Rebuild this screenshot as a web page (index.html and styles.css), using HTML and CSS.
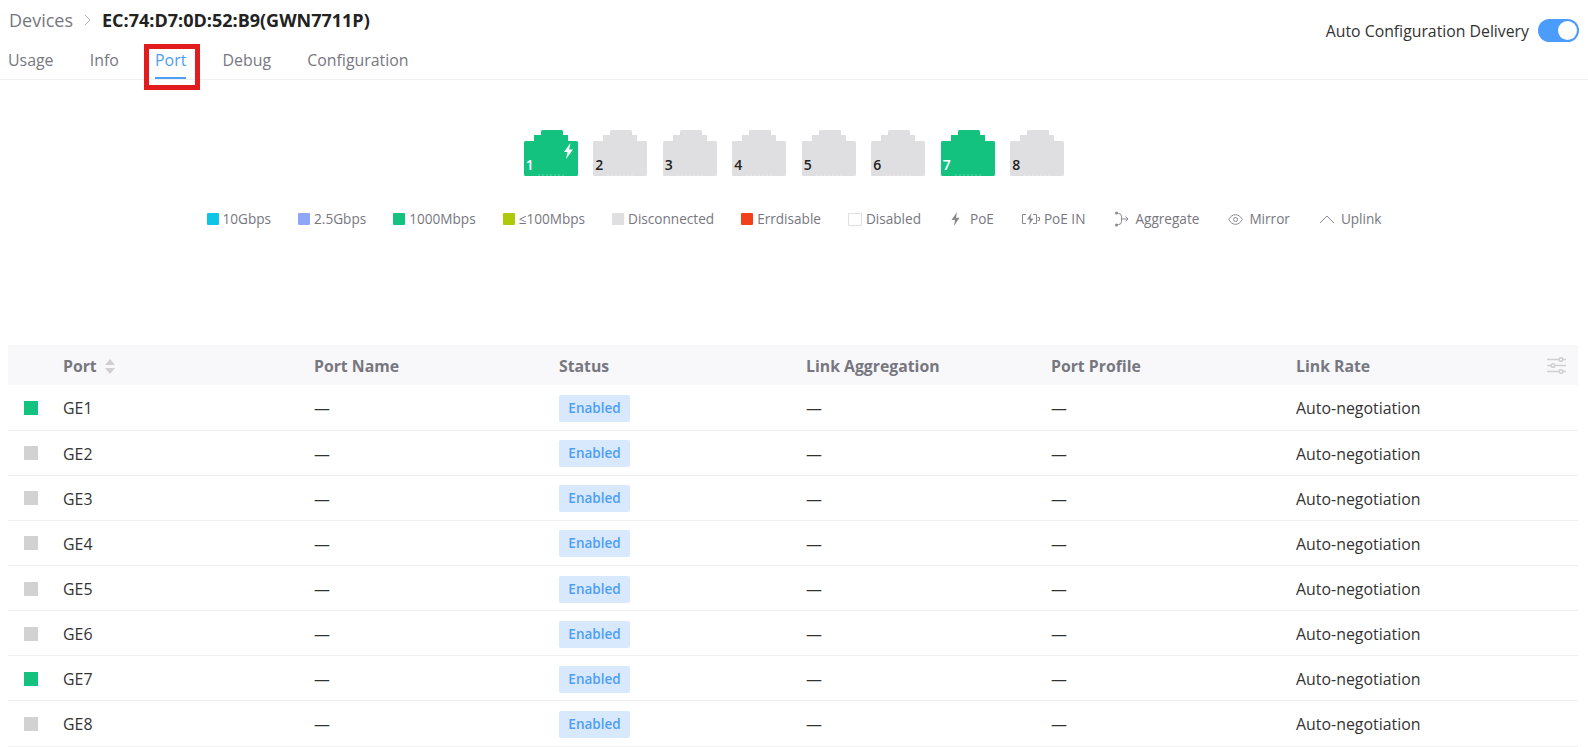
FILE: index.html
```html
<!DOCTYPE html>
<html lang="en">
<head>
    <meta charset="UTF-8">
    <title>Devices - Port</title>
    <link rel="stylesheet" href="styles.css">
</head>
<body>
    <svg class="defs" width="0" height="0">
        <symbol id="rj45" viewBox="0 0 54 46">
            <path d="M17 1.5 a1.5 1.5 0 0 1 1.5 -1.5 H37.5 a1.5 1.5 0 0 1 1.5 1.5 V5 H44 V11 H52.5 a1.5 1.5 0 0 1 1.5 1.5 V44.5 a1.5 1.5 0 0 1 -1.5 1.5 H1.5 a1.5 1.5 0 0 1 -1.5 -1.5 V12.5 a1.5 1.5 0 0 1 1.5 -1.5 H10 V5 H17 Z" fill="currentColor"/>
            <path d="M14 45 H40" stroke="#fff" stroke-opacity=".35" stroke-width="1" stroke-dasharray="2 2"/>
        </symbol>
    </svg>

    <header class="page-head">
        <div class="head-left">
            <div class="breadcrumb">
                <span class="crumb">Devices</span>
                <svg class="crumb-sep" width="7" height="12" viewBox="0 0 7 12"><path d="M1 1l5 5-5 5" fill="none" stroke="#b5b5ba" stroke-width="1"/></svg>
                <span class="crumb-current">EC:74:D7:0D:52:B9(GWN7711P)</span>
            </div>
            <nav class="tabs">
                <a class="tab">Usage</a>
                <a class="tab">Info</a>
                <a class="tab active">Port<span class="red-box"></span></a>
                <a class="tab">Debug</a>
                <a class="tab">Configuration</a>
            </nav>
        </div>
        <div class="auto-config">
            <span>Auto Configuration Delivery</span>
            <span class="switch"><span class="knob"></span></span>
        </div>
    </header>

    <section class="ports">
        <div class="port up"><svg width="54" height="46"><use href="#rj45"/></svg><svg class="bolt" width="11" height="16" viewBox="0 0 11 16"><path d="M7.5 0L1 9h3.6L3 16l7-9.6H6.2z" fill="#fff"/></svg><span class="port-num">1</span></div>
        <div class="port"><svg width="54" height="46"><use href="#rj45"/></svg><span class="port-num">2</span></div>
        <div class="port"><svg width="54" height="46"><use href="#rj45"/></svg><span class="port-num">3</span></div>
        <div class="port"><svg width="54" height="46"><use href="#rj45"/></svg><span class="port-num">4</span></div>
        <div class="port"><svg width="54" height="46"><use href="#rj45"/></svg><span class="port-num">5</span></div>
        <div class="port"><svg width="54" height="46"><use href="#rj45"/></svg><span class="port-num">6</span></div>
        <div class="port up"><svg width="54" height="46"><use href="#rj45"/></svg><span class="port-num">7</span></div>
        <div class="port"><svg width="54" height="46"><use href="#rj45"/></svg><span class="port-num">8</span></div>
    </section>

    <ul class="legend">
        <li><i class="swatch s-10g"></i>10Gbps</li>
        <li><i class="swatch s-2g"></i>2.5Gbps</li>
        <li><i class="swatch s-1g"></i>1000Mbps</li>
        <li><i class="swatch s-100m"></i>≤100Mbps</li>
        <li><i class="swatch s-off"></i>Disconnected</li>
        <li><i class="swatch s-err"></i>Errdisable</li>
        <li><i class="swatch s-disabled"></i>Disabled</li>
        <li class="wide-gap"><svg width="9" height="14" viewBox="0 0 9 14"><path d="M6 0L.5 8H4L3 14l5.5-8.200H5z" fill="#8a8a90"/></svg>PoE</li>
        <li><svg width="19" height="12" viewBox="0 0 19 12" fill="none" stroke="#8a8a90"><path d="M5 1.500H1.500v9H5M12 1.500h3.500v9H12M16.500 4.500h2v3h-2"/><path d="M10.500 0L6 6.500h3L8 12l4.500-6.500h-3z" fill="#8a8a90" stroke="none"/></svg>PoE IN</li>
        <li class="icon-gap"><svg width="15" height="16" viewBox="0 0 15 16" fill="none" stroke="#8a8a90"><circle cx="2.500" cy="2" r="1.500" fill="#8a8a90" stroke="none"/><circle cx="2.500" cy="14" r="1.500" fill="#8a8a90" stroke="none"/><path d="M3 2.500h1.500a3 3 0 0 1 3 3v5a3 3 0 0 1-3 3H3M7.500 8H14M11.500 5.500L14 8l-2.500 2.500"/></svg>Aggregate</li>
        <li class="icon-gap"><svg width="15" height="11" viewBox="0 0 15 11" fill="none" stroke="#8a8a90"><path d="M.7 5.500C2.500 2.300 4.800.7 7.500.7s5 1.600 6.800 4.800c-1.800 3.200-4.100 4.800-6.800 4.800S2.500 8.700.7 5.500z"/><circle cx="7.500" cy="5.500" r="2"/></svg>Mirror</li>
        <li class="icon-gap"><svg width="16" height="9" viewBox="0 0 16 9" fill="none" stroke="#8a8a90"><path d="M1 8l7-7 7 7"/></svg>Uplink</li>
    </ul>

    <table class="port-table">
        <colgroup>
            <col class="c-dot"><col class="c-port"><col class="c-name"><col class="c-status"><col class="c-agg"><col class="c-profile"><col>
        </colgroup>
        <thead>
            <tr>
                <th></th>
                <th><span class="sortable">Port<svg width="10" height="15" viewBox="0 0 10 15"><path d="M5 0l5 6H0zM5 15l5-6H0z" fill="#d0d0d4"/></svg></span></th>
                <th>Port Name</th>
                <th>Status</th>
                <th>Link Aggregation</th>
                <th>Port Profile</th>
                <th class="last-head">Link Rate
                    <svg class="col-settings" width="19" height="17" viewBox="0 0 19 17" fill="none" stroke="#cfcfd3" stroke-width="1.500"><path d="M0 2.500h12M16 2.500h3M0 8.500h4M8 8.500h11M0 14.500h12M16 14.500h3"/><circle cx="14" cy="2.500" r="1.800"/><circle cx="6" cy="8.500" r="1.800"/><circle cx="14" cy="14.500" r="1.800"/></svg>
                </th>
            </tr>
        </thead>
        <tbody>
            <tr><td><i class="dot on"></i></td><td>GE1</td><td>—</td><td><span class="badge">Enabled</span></td><td>—</td><td>—</td><td>Auto-negotiation</td></tr>
            <tr><td><i class="dot"></i></td><td>GE2</td><td>—</td><td><span class="badge">Enabled</span></td><td>—</td><td>—</td><td>Auto-negotiation</td></tr>
            <tr><td><i class="dot"></i></td><td>GE3</td><td>—</td><td><span class="badge">Enabled</span></td><td>—</td><td>—</td><td>Auto-negotiation</td></tr>
            <tr><td><i class="dot"></i></td><td>GE4</td><td>—</td><td><span class="badge">Enabled</span></td><td>—</td><td>—</td><td>Auto-negotiation</td></tr>
            <tr><td><i class="dot"></i></td><td>GE5</td><td>—</td><td><span class="badge">Enabled</span></td><td>—</td><td>—</td><td>Auto-negotiation</td></tr>
            <tr><td><i class="dot"></i></td><td>GE6</td><td>—</td><td><span class="badge">Enabled</span></td><td>—</td><td>—</td><td>Auto-negotiation</td></tr>
            <tr><td><i class="dot on"></i></td><td>GE7</td><td>—</td><td><span class="badge">Enabled</span></td><td>—</td><td>—</td><td>Auto-negotiation</td></tr>
            <tr><td><i class="dot"></i></td><td>GE8</td><td>—</td><td><span class="badge">Enabled</span></td><td>—</td><td>—</td><td>Auto-negotiation</td></tr>
        </tbody>
    </table>
</body>
</html>
```
FILE: styles.css
```css
body {
    margin: 0;
    background-color: #fff;
    font-family: "Open Sans", sans-serif;
    font-size: 15.9px;
    color: #333;
}

.defs {
    position: absolute;
}

.page-head {
    display: flex;
    justify-content: space-between;
    height: 79px;
    border-bottom: 1px solid #f0f0f2;
    padding: 0 9px 0 8px;
}

.breadcrumb {
    display: flex;
    align-items: center;
    height: 40px;
    padding-left: 1px;
}

.crumb {
    font-size: 18px;
    color: #77777f;
}

.crumb-sep {
    margin: 0 11px;
}

.crumb-current {
    font-size: 18px;
    font-weight: 700;
    color: #222;
}

.tabs {
    display: flex;
    gap: 36.2px;
}

.tab {
    position: relative;
    height: 37px;
    line-height: 40px;
    font-size: 15.9px;
    color: #77777f;
}

.tab.active {
    color: #4d9ef5;
    border-bottom: 2px solid #4d9ef5;
}

.red-box {
    position: absolute;
    left: -11px;
    right: -14px;
    top: 4px;
    height: 46px;
    border: 5px solid #e21b1f;
    box-sizing: border-box;
}

.auto-config {
    display: flex;
    align-items: center;
    gap: 9px;
    height: 23px;
    margin-top: 19px;
    font-size: 15.8px;
}

.switch {
    display: flex;
    justify-content: flex-end;
    align-items: center;
    width: 41px;
    height: 23px;
    padding: 0 2px;
    box-sizing: border-box;
    border-radius: 12px;
    background-color: #4b9cfb;
}

.knob {
    width: 19px;
    height: 19px;
    border-radius: 50%;
    background-color: #fff;
}

.ports {
    display: flex;
    justify-content: center;
    gap: 15.5px;
    margin-top: 49.5px;
    margin-bottom: -0.5px;
}

.port {
    position: relative;
    height: 46px;
    color: #dfdfe1;
}

.port.up {
    color: #14c27f;
}

.port-num {
    position: absolute;
    left: 2px;
    bottom: 3px;
    font-size: 14px;
    font-weight: 600;
    line-height: 16px;
    color: #222;
}

.port.up .port-num {
    color: #fff;
}

.bolt {
    position: absolute;
    right: 4px;
    top: 13px;
}

.legend {
    display: flex;
    justify-content: center;
    gap: 27px;
    list-style: none;
    margin: 35px 0 0;
    padding: 0;
    font-size: 13.6px;
    line-height: 18px;
    color: #77777f;
}

.legend li {
    display: flex;
    align-items: center;
    gap: 4px;
}

.legend .wide-gap {
    gap: 10px;
    margin-left: 3px;
}

.legend .icon-gap {
    gap: 6px;
    margin-left: 2px;
}

.swatch {
    width: 12px;
    height: 12px;
    border-radius: 1px;
}

.s-10g { background-color: #0dc6e6; }
.s-2g { background-color: #8fa5f7; }
.s-1g { background-color: #14c27f; }
.s-100m { background-color: #aec90a; }
.s-off { background-color: #dfdfe1; }
.s-err { background-color: #f2401c; }
.s-disabled { width: 14px; height: 13px; background-color: #fff; border: 1px solid #dfdfe1; box-sizing: border-box; }

.port-table {
    table-layout: fixed;
    border-collapse: collapse;
    width: 1570px;
    margin: 117px 0 0 8px;
}

.c-dot { width: 39px; }
.c-port { width: 251px; }
.c-name { width: 245px; }
.c-status { width: 247px; }
.c-agg { width: 245px; }
.c-profile { width: 245px; }

th, td {
    padding: 0 16px;
    text-align: left;
    box-sizing: border-box;
}

th {
    height: 40px;
    padding-top: 2px;
    background-color: #f8f8fa;
    font-size: 15.8px;
    font-weight: 700;
    color: #77777f;
}

td {
    height: 45.14px;
    padding-top: 2px;
    border-bottom: 1px solid #f0f0f2;
}

.sortable {
    display: inline-flex;
    align-items: center;
    gap: 8px;
}

.last-head {
    position: relative;
}

.col-settings {
    position: absolute;
    right: 12px;
    top: 12px;
}

.dot {
    display: block;
    width: 14px;
    height: 14px;
    margin-bottom: 1px;
    background-color: #d2d2d2;
}

.dot.on {
    background-color: #14c27f;
}

.badge {
    display: inline-block;
    width: 71px;
    height: 27px;
    line-height: 27px;
    text-align: center;
    border-radius: 2px;
    background-color: #d9e9fd;
    font-size: 13.5px;
    font-weight: 600;
    color: #4d9ef5;
    vertical-align: middle;
}
```
